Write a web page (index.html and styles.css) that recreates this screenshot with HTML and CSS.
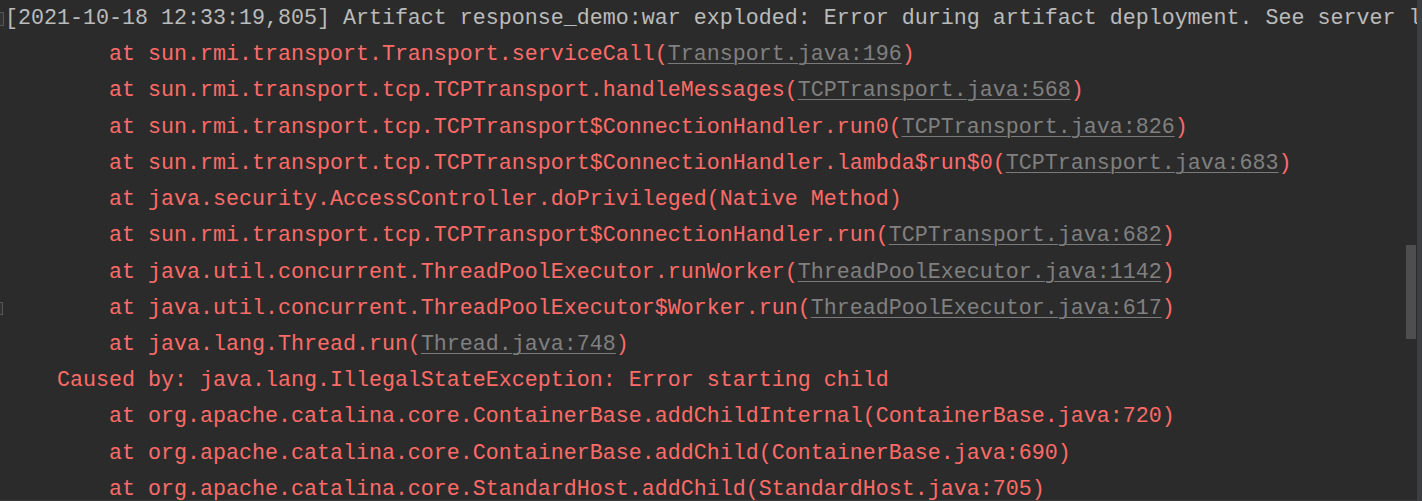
FILE: index.html
```html
<!DOCTYPE html>
<html>
<head>
<meta charset="utf-8">
<link rel="stylesheet" href="styles.css">
</head>
<body>
<div class="console">
  <div class="gutter">
    <div class="gline"><span class="fold"></span></div>
    <div class="gline"></div>
    <div class="gline"></div>
    <div class="gline"></div>
    <div class="gline"></div>
    <div class="gline"></div>
    <div class="gline"></div>
    <div class="gline"></div>
    <div class="gline"><span class="fold fold-small"></span></div>
  </div>
  <div class="output">
    <div class="line info">[2021-10-18 12:33:19,805] Artifact response_demo:war exploded: Error during artifact deployment. See server l</div>
    <div class="line err">        at sun.rmi.transport.Transport.serviceCall(<span class="link">Transport.java:196</span>)</div>
    <div class="line err">        at sun.rmi.transport.tcp.TCPTransport.handleMessages(<span class="link">TCPTransport.java:568</span>)</div>
    <div class="line err">        at sun.rmi.transport.tcp.TCPTransport$ConnectionHandler.run0(<span class="link">TCPTransport.java:826</span>)</div>
    <div class="line err">        at sun.rmi.transport.tcp.TCPTransport$ConnectionHandler.lambda$run$0(<span class="link">TCPTransport.java:683</span>)</div>
    <div class="line err">        at java.security.AccessController.doPrivileged(Native Method)</div>
    <div class="line err">        at sun.rmi.transport.tcp.TCPTransport$ConnectionHandler.run(<span class="link">TCPTransport.java:682</span>)</div>
    <div class="line err">        at java.util.concurrent.ThreadPoolExecutor.runWorker(<span class="link">ThreadPoolExecutor.java:1142</span>)</div>
    <div class="line err">        at java.util.concurrent.ThreadPoolExecutor$Worker.run(<span class="link">ThreadPoolExecutor.java:617</span>)</div>
    <div class="line err">        at java.lang.Thread.run(<span class="link">Thread.java:748</span>)</div>
    <div class="line err">    Caused by: java.lang.IllegalStateException: Error starting child</div>
    <div class="line err">        at org.apache.catalina.core.ContainerBase.addChildInternal(ContainerBase.java:720)</div>
    <div class="line err">        at org.apache.catalina.core.ContainerBase.addChild(ContainerBase.java:690)</div>
    <div class="line err">        at org.apache.catalina.core.StandardHost.addChild(StandardHost.java:705)</div>
  </div>
  <div class="track"></div>
  <div class="thumb"></div>
  <div class="bottom-edge"></div>
</div>
</body>
</html>
```

FILE: styles.css
```css
html, body {
  margin: 0;
  padding: 0;
  background: #2b2b2b;
  overflow: hidden;
}

.console {
  position: relative;
  display: grid;
  grid-template-columns: 5px 1412px 5px;
  width: 1422px;
  height: 501px;
  box-sizing: border-box;
  padding-top: 1px;
  overflow: hidden;
  background: #2b2b2b;
  font-family: "Liberation Mono", "DejaVu Sans Mono", monospace;
  font-size: 21.66px;
}

.gutter {
  display: flex;
  flex-direction: column;
}

.gline {
  height: 36.23px;
  display: flex;
  align-items: center;
}

.fold {
  display: block;
  width: 3px;
  height: 12px;
  border: 1px solid #555555;
  border-left: none;
  background: #333333;
  margin-top: -1px;
}

.fold-small {
  width: 2px;
  height: 11px;
}

.output {
  overflow: hidden;
  min-width: 0;
}

.line {
  height: 36.23px;
  line-height: 36.23px;
  white-space: pre;
}

.info {
  color: #bbbbbb;
}

.err {
  color: #ff6b68;
}

.link {
  color: #808080;
  text-decoration: underline;
  text-decoration-color: #7a7a7a;
  text-underline-offset: 3px;
  text-decoration-thickness: 1px;
}

.track {
  background: #3c3f41;
  margin-top: -1px;
}

.thumb {
  position: absolute;
  left: 1406px;
  top: 245px;
  width: 10px;
  height: 94px;
  background: #4e4e4e;
}

.bottom-edge {
  position: absolute;
  left: 0;
  bottom: 0;
  width: 1417px;
  height: 1px;
  background: #3a3a3a;
}
```
